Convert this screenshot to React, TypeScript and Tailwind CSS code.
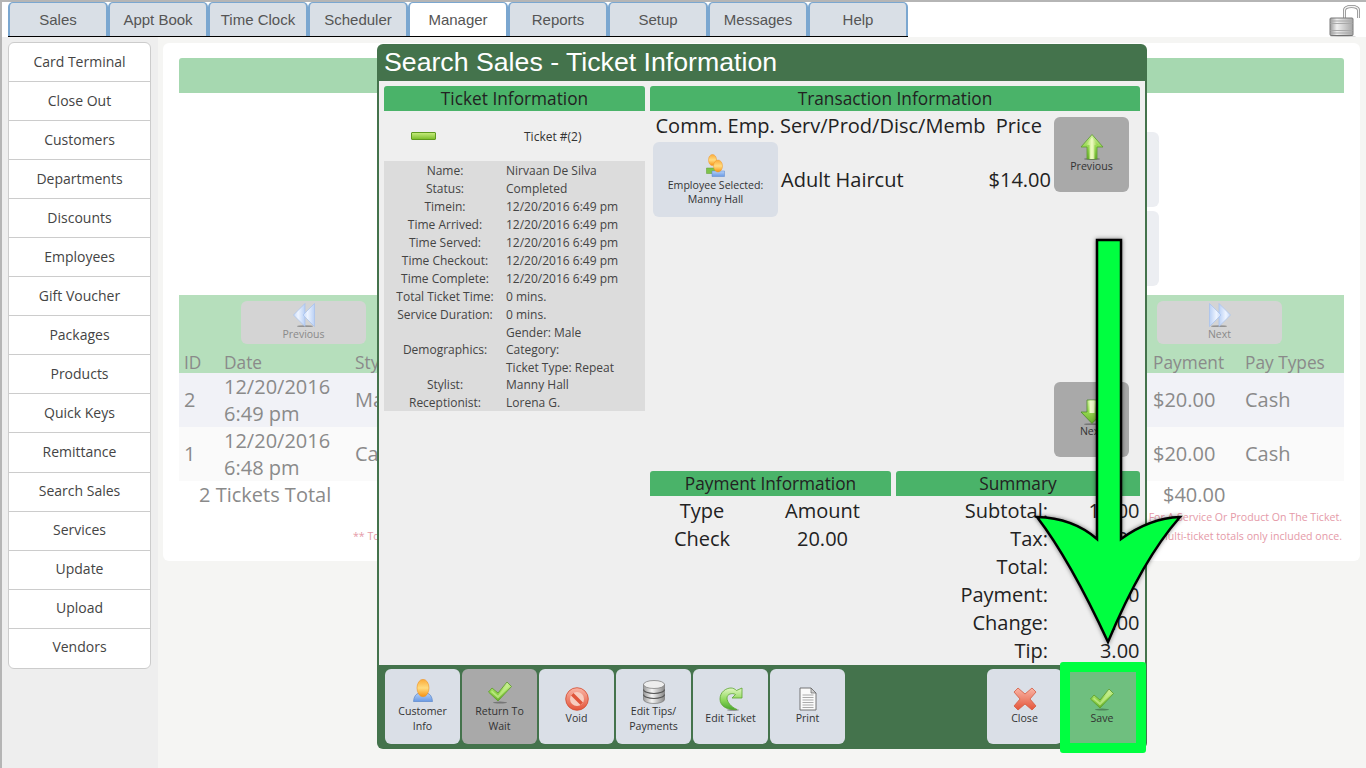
import React from "react";

const Grads = () => (
  <svg width="0" height="0" className="absolute">
    <defs>
      <linearGradient id="gGreen" x1="0" y1="0" x2="0" y2="1"><stop offset="0" stopColor="#d0f09c" /><stop offset="0.5" stopColor="#95d850" /><stop offset="1" stopColor="#6ab02c" /></linearGradient>
      <linearGradient id="gGreenH" x1="0" y1="0" x2="1" y2="0"><stop offset="0" stopColor="#a6de5c" /><stop offset="0.5" stopColor="#f0fbc4" /><stop offset="1" stopColor="#8ccc38" /></linearGradient>
      <linearGradient id="gRedo" x1="0" y1="0" x2="0" y2="1"><stop offset="0" stopColor="#e2f7c4" /><stop offset="0.55" stopColor="#8ed85a" /><stop offset="1" stopColor="#48a82e" /></linearGradient>
      <linearGradient id="gRed" x1="0" y1="0" x2="0" y2="1"><stop offset="0" stopColor="#f9b5a6" /><stop offset="1" stopColor="#e4553a" /></linearGradient>
      <linearGradient id="gOrange" x1="0" y1="0" x2="0" y2="1"><stop offset="0" stopColor="#fbaa38" /><stop offset="0.5" stopColor="#ffdc80" /><stop offset="1" stopColor="#f8920f" /></linearGradient>
      <linearGradient id="gBlue" x1="0" y1="0" x2="0" y2="1"><stop offset="0" stopColor="#b4d0f8" /><stop offset="1" stopColor="#6a9ae4" /></linearGradient>
      <linearGradient id="gSilver" x1="0" y1="0" x2="1" y2="0"><stop offset="0" stopColor="#9a9a9a" /><stop offset="0.4" stopColor="#f5f5f5" /><stop offset="1" stopColor="#8a8a8a" /></linearGradient>
      <linearGradient id="gChev" x1="0" y1="0" x2="1" y2="0"><stop offset="0" stopColor="#b9d0f5" /><stop offset="0.6" stopColor="#eef4ff" /><stop offset="1" stopColor="#c6d9f8" /></linearGradient>
      <linearGradient id="gLock" x1="0" y1="0" x2="1" y2="0"><stop offset="0" stopColor="#9a9a9a" /><stop offset="0.3" stopColor="#efefef" /><stop offset="1" stopColor="#a5a5a5" /></linearGradient>
    </defs>
  </svg>
);

const Shadow = ({ cx = 12, cy = 23, rx = 8 }: { cx?: number; cy?: number; rx?: number }) => (
  <ellipse cx={cx} cy={cy} rx={rx} ry={1} fill="#000" opacity={0.3} />
);

const ArrowUp = () => (
  <svg width="24" height="26" viewBox="0 0 24 26">
    <Shadow cy={25} />
    <path d="M12 0.5 L23 13 H17 V25 H7 V13 H1 Z" fill="url(#gGreen)" stroke="#5d9b30" strokeWidth="0.8" strokeLinejoin="round" />
    <path d="M12 3 L18 11 H14.5 V25 H9.5 V11 H6 Z" fill="url(#gGreenH)" />
  </svg>
);
const ArrowDown = () => (
  <svg width="24" height="26" viewBox="0 0 24 26">
    <Shadow cy={25.2} />
    <path d="M7 1 H17 V13 H23 L12 24.5 L1 13 H7 Z" fill="url(#gGreen)" stroke="#4d8a2a" strokeWidth="0.8" strokeLinejoin="round" />
    <path d="M9.5 1.5 H14.5 V14 H9.5 Z" fill="#eefac8" />
  </svg>
);
const Check = () => (
  <svg width="24" height="24" viewBox="0 0 24 24">
    <Shadow cy={22.6} rx={7} />
    <path d="M0.5 12 L4 8 L10 13 L19 2 L23.5 6.5 L10 21 Z" fill="url(#gGreen)" stroke="#5a9a2a" strokeWidth="0.8" strokeLinejoin="round" />
    <path d="M10 15.5 L19 4 L21.5 6.5 L10 18.5 L3 12 L4 10.5 Z" fill="#c8f090" opacity="0.7" />
  </svg>
);
const NoSign = () => (
  <svg width="24" height="24" viewBox="0 0 24 24">
    <circle cx="12" cy="12" r="11.3" fill="url(#gRed)" stroke="#d24a2e" strokeWidth="0.8" />
    <circle cx="12" cy="12" r="7" fill="#f7cdc0" />
    <path d="M6 8.5 L8.5 6 L18 15.5 L15.5 18 Z" fill="#e0553a" />
  </svg>
);
const Database = () => (
  <svg width="24" height="24" viewBox="0 0 24 24">
    <path d="M1.5 4.5 V19.5 A10.5 4 0 0 0 22.5 19.5 V4.5 Z" fill="url(#gSilver)" stroke="#777" strokeWidth="0.7" />
    <ellipse cx="12" cy="4.5" rx="10.5" ry="4" fill="#ededed" stroke="#777" strokeWidth="0.7" />
    <path d="M1.5 9.5 A10.5 4 0 0 0 22.5 9.5 M1.5 14.5 A10.5 4 0 0 0 22.5 14.5" fill="none" stroke="#555" strokeWidth="1.1" />
  </svg>
);
const Redo = () => (
  <svg width="24" height="24" viewBox="0 0 24 24">
    <Shadow cx={14} cy={23} rx={6} />
    <path d="M18 22.5 C8 23.5 1 19 1 12 C1 5 7 1 12 1 C14 1 16 2 17.5 3.5 L23 1 V11 H13 L16.5 7.5 C13 5.5 8 7 8 11 C8 15 12 20 18 22.5 Z" fill="url(#gRedo)" stroke="#5aa52e" strokeWidth="0.8" strokeLinejoin="round" />
  </svg>
);
const Doc = () => (
  <svg width="18" height="24" viewBox="0 0 18 24">
    <path d="M1 1 H12 L17 6 V23 H1 Z" fill="#fafafa" stroke="#666" strokeWidth="0.9" />
    <path d="M12 1 V6 H17 Z" fill="#cfcfcf" stroke="#666" strokeWidth="0.7" />
    <path d="M3.5 8 H14.5 M3.5 10.5 H14.5 M3.5 13 H14.5 M3.5 15.5 H14.5 M3.5 18 H14.5 M3.5 20.5 H14.5" stroke="#aaa" strokeWidth="1" />
  </svg>
);
const RedX = () => (
  <svg width="24" height="24" viewBox="0 0 24 24">
    <path d="M5 1 L12 7 L19 1 L23 5 L17 12 L23 19 L19 23 L12 17 L5 23 L1 19 L7 12 L1 5 Z" fill="url(#gRed)" stroke="#d4593f" strokeWidth="0.8" strokeLinejoin="round" />
  </svg>
);
const Person = () => (
  <svg width="24" height="24" viewBox="0 0 24 24" className="-mt-[1px]">
    <path d="M2.5 22.5 Q3 15.5 8 14 H16 Q21 15.5 21.5 22.5 Z" fill="url(#gBlue)" stroke="#5a86cc" strokeWidth="0.7" />
    <ellipse cx="12" cy="9" rx="6" ry="8.7" fill="url(#gOrange)" stroke="#ee962a" strokeWidth="0.6" />
  </svg>
);
const People = () => (
  <svg width="20" height="23" viewBox="0 0 20 23">
    <path d="M0.5 14 H11 V19.5 H0.5 Z" fill="#7fc34a" stroke="#5d9a30" strokeWidth="0.5" />
    <ellipse cx="6.5" cy="6" rx="4" ry="5.6" fill="url(#gOrange)" stroke="#ee962a" strokeWidth="0.5" />
    <path d="M6 22.5 V17 H18.5 V22.5 Z" fill="url(#gBlue)" stroke="#5a86cc" strokeWidth="0.5" />
    <ellipse cx="12" cy="12" rx="4.5" ry="6" fill="url(#gOrange)" stroke="#ee962a" strokeWidth="0.5" />
  </svg>
);
const Chevrons = ({ left }: { left?: boolean }) => (
  <svg width="22" height="24" viewBox="0 0 22 24" className="-mt-[1px]" style={{ transform: left ? "scaleX(-1)" : undefined }}>
    <Shadow cx={10} cy={23.3} rx={8} />
    <path d="M10 0.5 L21.5 12 L10 23.5 Z" fill="url(#gChev)" stroke="#a6c2ee" strokeWidth="0.7" strokeLinejoin="round" />
    <path d="M0.5 0.5 L12 12 L0.5 23.5 Z" fill="url(#gChev)" stroke="#a6c2ee" strokeWidth="0.7" strokeLinejoin="round" />
  </svg>
);
const Lock = () => (
  <svg width="32" height="32" viewBox="0 0 32 32">
    <path d="M15.5 14 V5.5 C15.5 2.5 18 1.5 22.5 1.5 C27 1.5 29.5 2.5 29.5 5.5 V13" fill="none" stroke="#8a8a8a" strokeWidth="3" />
    <path d="M15.5 14 V5.5 C15.5 2.5 18 1.5 22.5 1.5 C27 1.5 29.5 2.5 29.5 5.5 V13" fill="none" stroke="#f4f4f4" strokeWidth="1.4" />
    <rect x="1" y="13" width="23" height="17.5" rx="1" fill="url(#gLock)" stroke="#7a7a7a" />
    <path d="M1.5 16 H23.5 M1.5 18.5 H23.5 M1.5 25.5 H23.5 M1.5 28 H23.5" stroke="#a9a9a9" strokeWidth="1.1" />
    <ellipse cx="14" cy="31.2" rx="13" ry="0.8" fill="#000" opacity="0.2" />
  </svg>
);

const tabs = ["Sales", "Appt Book", "Time Clock", "Scheduler", "Manager", "Reports", "Setup", "Messages", "Help"];
const side = ["Card Terminal", "Close Out", "Customers", "Departments", "Discounts", "Employees", "Gift Voucher", "Packages", "Products", "Quick Keys", "Remittance", "Search Sales", "Services", "Update", "Upload", "Vendors"];
const info: [string, string][] = [
  ["Name:", "Nirvaan De Silva"],
  ["Status:", "Completed"],
  ["Timein:", "12/20/2016 6:49 pm"],
  ["Time Arrived:", "12/20/2016 6:49 pm"],
  ["Time Served:", "12/20/2016 6:49 pm"],
  ["Time Checkout:", "12/20/2016 6:49 pm"],
  ["Time Complete:", "12/20/2016 6:49 pm"],
  ["Total Ticket Time:", "0 mins."],
  ["Service Duration:", "0 mins."],
];
const summary = [["Subtotal:", "14.00"], ["Tax:", "0.00"], ["Total:", "14.00"], ["Payment:", "20.00"], ["Change:", "3.00"], ["Tip:", "3.00"]];

const Btn = ({ icon, label, dark, className = "" }: { icon: React.ReactNode; label: React.ReactNode; dark?: boolean; className?: string }) => (
  <div className={`flex h-[75px] w-[75px] shrink-0 flex-col items-center justify-center rounded-md text-center text-[10.6px] leading-[15px] text-[#333] ${dark ? "bg-[#a9a9a9]" : "bg-[#dadfe7]"} ${className}`}>
    <div className="flex h-[24px] items-center justify-center">{icon}</div>
    <div>{label}</div>
  </div>
);

const Head = ({ children, className = "" }: { children: React.ReactNode; className?: string }) => (
  <div className={`flex h-[25px] items-center justify-center rounded-t-[3px] bg-[#4ab369] pt-[1px] text-[17.3px] leading-[24px] text-[#222] ${className}`}>{children}</div>
);

const PageNav = ({ label, left }: { label: string; left?: boolean }) => (
  <div className="flex h-[43px] w-[125px] flex-col items-center justify-center rounded-md bg-[#d4d4d4] text-[10.5px] leading-[14px] text-[#8a8a8a]">
    <div className="h-[23px]"><Chevrons left={left} /></div>
    <div>{label}</div>
  </div>
);

const tableCols = "grid grid-cols-[40px_131px_798px_92px_1fr]";

export default function App() {
  return (
    <div className="relative h-[768px] w-[1366px] overflow-hidden border-l-2 border-t-2 border-[#b5b5b5] bg-[#f5f5f3] font-['Open_Sans',sans-serif]">
      <Grads />
      {/* top bar */}
      <div className="flex h-[35px] items-end justify-between bg-white pl-[6px] pr-[5px]">
        <div className="flex border-b border-black">
          {tabs.map((t) => (
            <div key={t} className={`flex h-[34px] w-[100px] items-center justify-center rounded-t-[5px] border-x-2 border-t border-[#7ba7d0] pt-[2px] font-['Liberation_Sans',sans-serif] text-[15px] text-[#555] ${t === "Manager" ? "bg-white" : "bg-[#d9dfe6]"}`}>{t}</div>
          ))}
        </div>
        <Lock />
      </div>

      <div className="flex">
        {/* sidebar */}
        <div className="h-[731px] w-[156px] shrink-0 bg-[#eeeeee] pl-[6px] pt-[5px]">
          <div className="w-[143px] rounded-md border border-[#cccccc] bg-white">
            {side.map((s, i) => (
              <div key={s} className={`flex h-[39.06px] items-center justify-center border-b pb-[2px] text-[14px] text-[#444] ${i < side.length - 1 ? "border-[#cccccc]" : "border-transparent"}`}>{s}</div>
            ))}
          </div>
        </div>

        {/* main panel */}
        <div className="ml-[5px] mt-[6px] h-[518px] w-[1197px] rounded-md bg-white px-[16px] pt-[15px]">
          <div className="h-[35px] rounded-t-[3px] bg-[#a6d8b0]" />
          <div className="mr-[185px] mt-[39px] flex flex-col items-end gap-[4px]">
            <div className="h-[75px] w-[125px] rounded-md bg-[#eceef2]" />
            <div className="h-[75px] w-[125px] rounded-md bg-[#eceef2]" />
          </div>
          <div className="mt-[9px] bg-[#b6dfbc] text-[#8a8a8a]">
            <div className="flex h-[55px] items-start justify-between pl-[62px] pr-[62px] pt-[6px]">
              <PageNav label="Previous" left />
              <PageNav label="Next" />
            </div>
            <div className={`${tableCols} h-[23px] pl-[5px] text-[17.3px] leading-[25px]`}>
              <div>ID</div><div>Date</div><div>Stylist</div><div>Payment</div><div>Pay Types</div>
            </div>
          </div>
          <div className={`${tableCols} h-[54px] items-center bg-[#f1f2f7] pl-[5px] text-[20px] leading-[27px] text-[#8a8a8a]`}>
            <div className="pb-[2px]">2</div><div>12/20/2016<br />6:49 pm</div><div className="pb-[2px]">Manny Hall</div><div className="pb-[2px]">$20.00</div><div className="pb-[2px]">Cash</div>
          </div>
          <div className={`${tableCols} h-[54px] items-center bg-[#fafafa] pl-[5px] text-[20px] leading-[27px] text-[#8a8a8a]`}>
            <div className="pb-[2px]">1</div><div>12/20/2016<br />6:48 pm</div><div className="pb-[2px]">Carl Jones</div><div className="pb-[2px]">$20.00</div><div className="pb-[2px]">Cash</div>
          </div>
          <div className="flex h-[28px] items-center pl-[20px] text-[20px] text-[#8a8a8a]">
            <div className="w-[964px]">2 Tickets Total</div><div>$40.00</div>
          </div>
          <div className="-mt-[1px] pr-[2px] text-right text-[10.6px] leading-[19px] text-[#e59aa8]">
            <div>** Ticket Count Is Not Increased For A Service Or Product On The Ticket.</div>
            <div className="flex justify-between pl-[174px]"><span>** Totals</span><span>multi-ticket totals only included once.</span></div>
          </div>
        </div>
      </div>

      {/* modal */}
      <div className="absolute left-[375px] top-[42px] flex h-[705px] w-[770px] flex-col overflow-hidden rounded-md bg-[#44734c]">
        <div className="h-[37px] shrink-0 pl-[7px] font-['Liberation_Sans',sans-serif] text-[26.7px] leading-[37px] text-white">Search Sales - Ticket Information</div>
        <div className="mx-[2px] flex flex-1 gap-[5px] bg-[#efefef] pl-[5px] pt-[5px]">
          <div className="w-[261px] shrink-0">
            <Head>Ticket Information</Head>
            <div className="flex h-[50px] items-center text-[12px] text-[#333]">
              <div className="ml-[27px] h-[8px] w-[25px] rounded-[1px] border border-[#5f9a1e] bg-linear-to-b from-[#c4ea78] to-[#7fbf2a]" />
              <div className="ml-[88px] pt-[2px]">Ticket #(2)</div>
            </div>
            <div className="grid h-[250px] grid-cols-[122px_1fr] content-start bg-[#dcdcdc] pt-[1px] text-[12px] leading-[18px] text-[#444]">
              {info.map(([a, b]) => (
                <React.Fragment key={a}>
                  <div className="text-center">{a}</div>
                  <div>{b}</div>
                </React.Fragment>
              ))}
              <div className="flex items-center justify-center">Demographics:</div>
              <div className="leading-[17.3px]">Gender: Male<br />Category:<br />Ticket Type: Repeat</div>
              <div className="text-center">Stylist:</div><div>Manny Hall</div>
              <div className="text-center">Receptionist:</div><div>Lorena G.</div>
            </div>
          </div>
          <div className="flex w-[490px] flex-col">
            <Head>Transaction Information</Head>
            <div className="flex h-[346px] pt-[6px]">
              <div className="w-[404px]">
                <div className="h-[25px] pl-[5.5px] text-[20px] leading-[18px] text-[#222] whitespace-pre">Comm. Emp. Serv/Prod/Disc/Memb  Price</div>
                <div className="flex items-center">
                  <div className="ml-[3px] flex h-[75px] w-[125px] flex-col items-center justify-center rounded-md bg-[#dadfe7] text-center text-[10.6px] leading-[14px] text-[#333]">
                    <People />
                    <div className="mt-[1px]">Employee Selected:<br />Manny Hall</div>
                  </div>
                  <div className="ml-[3px] flex-1 text-[20px] text-[#222]">Adult Haircut</div>
                  <div className="mr-[3px] text-[20px] text-[#222]">$14.00</div>
                </div>
              </div>
              <div className="flex w-[75px] flex-col justify-between">
                <Btn dark icon={<ArrowUp />} label="Previous" />
                <Btn dark icon={<ArrowDown />} label="Next" />
              </div>
            </div>
            <div className="mt-[14px] flex gap-[5px]">
              <div className="w-[241px]">
                <Head>Payment Information</Head>
                <div className="mt-[1px] grid grid-cols-[120px_1fr] text-center text-[20px] leading-[28px] text-[#222]">
                  <div className="pr-[16px]">Type</div><div className="pr-[16px]">Amount</div>
                  <div className="pr-[16px]">Check</div><div className="pr-[16px]">20.00</div>
                </div>
              </div>
              <div className="w-[244px]">
                <Head>Summary</Head>
                <div className="mt-[1px] pr-[0.5px] text-[20px] leading-[28px] text-[#222]">
                  {summary.map(([a, b]) => (
                    <div key={a} className="flex justify-between">
                      <div className="w-[152px] text-right">{a}</div>
                      <div>{b}</div>
                    </div>
                  ))}
                </div>
              </div>
            </div>
          </div>
        </div>
        <div className="flex h-[84px] shrink-0 items-start justify-between px-[8px] pt-[4px]">
          <div className="flex gap-[2px]">
            <Btn icon={<Person />} label={<>Customer<br />Info</>} />
            <Btn dark icon={<Check />} label={<>Return To<br />Wait</>} />
            <Btn icon={<NoSign />} label="Void" />
            <Btn icon={<Database />} label={<>Edit Tips/<br />Payments</>} />
            <Btn icon={<Redo />} label="Edit Ticket" />
            <Btn icon={<Doc />} label="Print" />
          </div>
          <div className="flex gap-[2px]">
            <Btn icon={<RedX />} label="Close" />
            <Btn icon={<Check />} label="Save" />
          </div>
        </div>
      </div>

      {/* tutorial highlight */}
      <div className="absolute left-[1058px] top-[660px] h-[91px] w-[86px] rounded-[3px] border-[10px] border-[#00ff40]">
        <div className="flex h-full w-full flex-col items-center justify-center bg-[#6fbf7f] pb-[2px] pr-[2px] text-[10.6px] leading-[15px] text-[#333]">
          <Check />
          <div>Save</div>
        </div>
      </div>

      {/* tutorial arrow */}
      <svg className="absolute left-[1028px] top-[230px] drop-shadow-[0_0_2px_rgba(0,0,0,0.5)]" width="160" height="420" viewBox="1030 232 160 420">
        <path d="M1097 240 H1121 V539 Q1150 518 1180 517 Q1142 560 1108 642 Q1070 560 1037 517 Q1073 518 1097 539 Z" fill="#00ff40" stroke="#000" strokeWidth="2.5" strokeLinejoin="miter" />
      </svg>
    </div>
  );
}
